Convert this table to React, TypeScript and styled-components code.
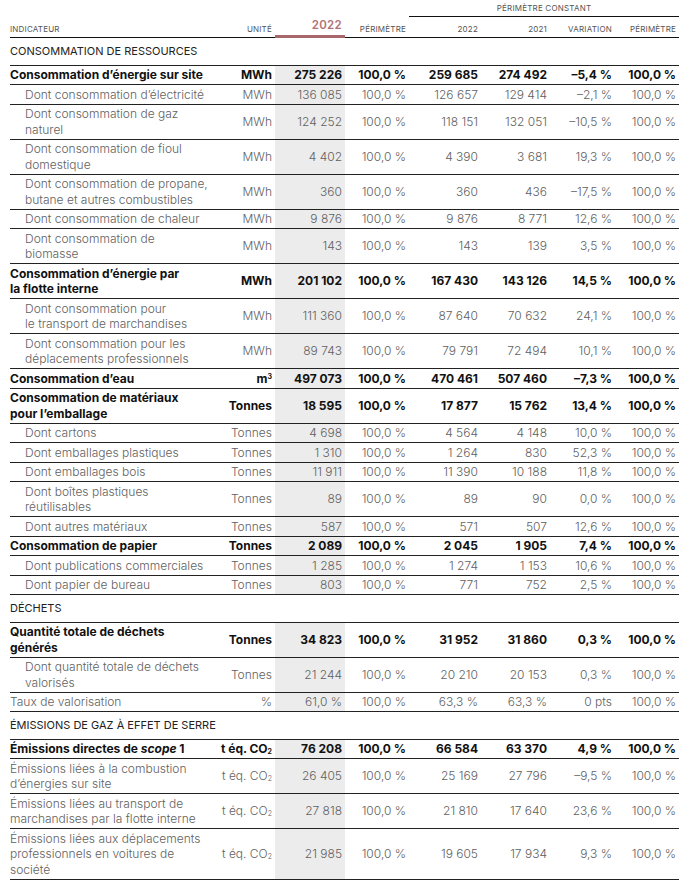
import React from 'react';
import styled, { createGlobalStyle, css } from 'styled-components';

const GlobalStyle = createGlobalStyle`
  html, body { margin: 0; padding: 0; background: #fff; }
  body {
    font-family: Inter, "Noto Sans", "Liberation Sans", sans-serif;
    -webkit-font-smoothing: antialiased;
  }
`;

const Page = styled.div`
  padding: 0 12px 0 10px;
`;

const Table = styled.table`
  width: 669px;
  table-layout: fixed;
  border-collapse: separate;
  border-spacing: 0;
  font-size: 12px;
  line-height: 15.5px;
`;

const GroupCell = styled.th`
  padding: 3px 0 3px;
  font-size: 8px;
  line-height: 10px;
  font-weight: 400;
  color: #555;
  letter-spacing: 0.2px;
  text-align: center;
  border-bottom: 1px solid #111;
`;

const HeadCell = styled.th<{ $align?: 'left' | 'right'; $year?: boolean }>`
  padding: 0 3px 3px;
  font-size: 8px;
  line-height: 10px;
  font-weight: 400;
  color: #555;
  letter-spacing: 0.2px;
  text-transform: uppercase;
  text-align: ${(p) => p.$align ?? 'right'};
  vertical-align: bottom;
  border-bottom: 1px solid #111;
  ${(p) => p.$align === 'left' && css`padding-left: 0;`}
  ${(p) =>
    p.$year &&
    css`
      padding-top: 1px;
      font-size: 11.5px;
      line-height: 14px;
      font-weight: 600;
      letter-spacing: 0.3px;
      color: #b27376;
      padding-bottom: 3px;
      border-bottom: 3px solid #a8686b;
    `}
`;

const SectionCell = styled.td`
  padding: 6px 0 5px;
  font-size: 11px;
  line-height: 15.5px;
  color: #222;
  text-transform: uppercase;
  border-bottom: 1px solid #222;
`;

type Variant = 'main' | 'sub' | 'plain';

const Cell = styled.td<{ $variant: Variant; $shaded?: boolean }>`
  padding: 1.5px 3px;
  text-align: right;
  vertical-align: middle;
  white-space: nowrap;
  border-bottom: 1px solid #222;
  font-weight: ${(p) => (p.$variant === 'main' ? 700 : 300)};
  color: ${(p) => (p.$variant === 'main' ? '#111' : '#616161')};
  background: ${(p) => (p.$shaded ? '#ececec' : 'transparent')};
`;

const LabelCell = styled(Cell)`
  text-align: left;
  padding-left: ${(p) => (p.$variant === 'sub' ? '15px' : '0')};
`;

const Sub = styled.sub`
  font-size: 7px;
  line-height: 0;
  vertical-align: -1px;
`;

const Sup = styled.sup`
  font-size: 7px;
  line-height: 0;
  vertical-align: 4px;
`;

type Row =
  | { kind: 'section'; label: string }
  | {
      kind: 'row';
      variant: Variant;
      label: React.ReactNode[];
      unit: React.ReactNode;
      values: [string, string, string, string, string, string];
    };

const co2 = (
  <>
    t éq. CO<Sub>2</Sub>
  </>
);

const P = '100,0\u00a0%';
const n = (s: string) => s.replace(/ /g, '\u00a0');

const rows: Row[] = [
  { kind: 'section', label: 'Consommation de ressources' },
  { kind: 'row', variant: 'main', label: ['Consommation d’énergie sur site'], unit: 'MWh', values: ['275 226', P, '259 685', '274 492', '–5,4 %', P] },
  { kind: 'row', variant: 'sub', label: ['Dont consommation d’électricité'], unit: 'MWh', values: ['136 085', P, '126 657', '129 414', '–2,1 %', P] },
  { kind: 'row', variant: 'sub', label: ['Dont consommation de gaz', 'naturel'], unit: 'MWh', values: ['124 252', P, '118 151', '132 051', '–10,5 %', P] },
  { kind: 'row', variant: 'sub', label: ['Dont consommation de fioul', 'domestique'], unit: 'MWh', values: ['4 402', P, '4 390', '3 681', '19,3 %', P] },
  { kind: 'row', variant: 'sub', label: ['Dont consommation de propane,', 'butane et autres combustibles'], unit: 'MWh', values: ['360', P, '360', '436', '–17,5 %', P] },
  { kind: 'row', variant: 'sub', label: ['Dont consommation de chaleur'], unit: 'MWh', values: ['9 876', P, '9 876', '8 771', '12,6 %', P] },
  { kind: 'row', variant: 'sub', label: ['Dont consommation de', 'biomasse'], unit: 'MWh', values: ['143', P, '143', '139', '3,5 %', P] },
  { kind: 'row', variant: 'main', label: ['Consommation d’énergie par', 'la flotte interne'], unit: 'MWh', values: ['201 102', P, '167 430', '143 126', '14,5 %', P] },
  { kind: 'row', variant: 'sub', label: ['Dont consommation pour', 'le transport de marchandises'], unit: 'MWh', values: ['111 360', P, '87 640', '70 632', '24,1 %', P] },
  { kind: 'row', variant: 'sub', label: ['Dont consommation pour les', 'déplacements professionnels'], unit: 'MWh', values: ['89 743', P, '79 791', '72 494', '10,1 %', P] },
  { kind: 'row', variant: 'main', label: ['Consommation d’eau'], unit: <>m<Sup>3</Sup></>, values: ['497 073', P, '470 461', '507 460', '–7,3 %', P] },
  { kind: 'row', variant: 'main', label: ['Consommation de matériaux', 'pour l’emballage'], unit: 'Tonnes', values: ['18 595', P, '17 877', '15 762', '13,4 %', P] },
  { kind: 'row', variant: 'sub', label: ['Dont cartons'], unit: 'Tonnes', values: ['4 698', P, '4 564', '4 148', '10,0 %', P] },
  { kind: 'row', variant: 'sub', label: ['Dont emballages plastiques'], unit: 'Tonnes', values: ['1 310', P, '1 264', '830', '52,3 %', P] },
  { kind: 'row', variant: 'sub', label: ['Dont emballages bois'], unit: 'Tonnes', values: ['11 911', P, '11 390', '10 188', '11,8 %', P] },
  { kind: 'row', variant: 'sub', label: ['Dont boîtes plastiques', 'réutilisables'], unit: 'Tonnes', values: ['89', P, '89', '90', '0,0 %', P] },
  { kind: 'row', variant: 'sub', label: ['Dont autres matériaux'], unit: 'Tonnes', values: ['587', P, '571', '507', '12,6 %', P] },
  { kind: 'row', variant: 'main', label: ['Consommation de papier'], unit: 'Tonnes', values: ['2 089', P, '2 045', '1 905', '7,4 %', P] },
  { kind: 'row', variant: 'sub', label: ['Dont publications commerciales'], unit: 'Tonnes', values: ['1 285', P, '1 274', '1 153', '10,6 %', P] },
  { kind: 'row', variant: 'sub', label: ['Dont papier de bureau'], unit: 'Tonnes', values: ['803', P, '771', '752', '2,5 %', P] },
  { kind: 'section', label: 'Déchets' },
  { kind: 'row', variant: 'main', label: ['Quantité totale de déchets', 'générés'], unit: 'Tonnes', values: ['34 823', P, '31 952', '31 860', '0,3 %', P] },
  { kind: 'row', variant: 'sub', label: ['Dont quantité totale de déchets', 'valorisés'], unit: 'Tonnes', values: ['21 244', P, '20 210', '20 153', '0,3 %', P] },
  { kind: 'row', variant: 'plain', label: ['Taux de valorisation'], unit: '%', values: ['61,0 %', P, '63,3 %', '63,3 %', '0 pts', P] },
  { kind: 'section', label: 'Émissions de gaz à effet de serre' },
  { kind: 'row', variant: 'main', label: [<>Émissions directes de <em>scope</em> 1</>], unit: co2, values: ['76 208', P, '66 584', '63 370', '4,9 %', P] },
  { kind: 'row', variant: 'plain', label: ['Émissions liées à la combustion', 'd’énergies sur site'], unit: co2, values: ['26 405', P, '25 169', '27 796', '–9,5 %', P] },
  { kind: 'row', variant: 'plain', label: ['Émissions liées au transport de', 'marchandises par la flotte interne'], unit: co2, values: ['27 818', P, '21 810', '17 640', '23,6 %', P] },
  { kind: 'row', variant: 'plain', label: ['Émissions liées aux déplacements', 'professionnels en voitures de', 'société'], unit: co2, values: ['21 985', P, '19 605', '17 934', '9,3 %', P] },
];

const widths = [204, 61, 70, 64, 72, 69, 65, 64];

export default function App() {
  return (
    <>
      <GlobalStyle />
      <Page>
        <Table>
          <colgroup>
            {widths.map((w, i) => (
              <col key={i} style={{ width: w }} />
            ))}
          </colgroup>
          <thead>
            <tr>
              <th colSpan={4} />
              <GroupCell colSpan={4}>PÉRIMÈTRE CONSTANT</GroupCell>
            </tr>
            <tr>
              <HeadCell $align="left">Indicateur</HeadCell>
              <HeadCell>Unité</HeadCell>
              <HeadCell $year>2022</HeadCell>
              <HeadCell>Périmètre</HeadCell>
              <HeadCell>2022</HeadCell>
              <HeadCell>2021</HeadCell>
              <HeadCell>Variation</HeadCell>
              <HeadCell>Périmètre</HeadCell>
            </tr>
          </thead>
          <tbody>
            {rows.map((r, i) =>
              r.kind === 'section' ? (
                <tr key={i}>
                  <SectionCell colSpan={8}>{r.label}</SectionCell>
                </tr>
              ) : (
                <tr key={i}>
                  <LabelCell $variant={r.variant}>
                    {r.label.map((l, j) => (
                      <React.Fragment key={j}>
                        {j > 0 && <br />}
                        {l}
                      </React.Fragment>
                    ))}
                  </LabelCell>
                  <Cell $variant={r.variant}>{r.unit}</Cell>
                  {r.values.map((v, j) => (
                    <Cell key={j} $variant={r.variant} $shaded={j === 0}>
                      {n(v)}
                    </Cell>
                  ))}
                </tr>
              )
            )}
          </tbody>
        </Table>
      </Page>
    </>
  );
}
